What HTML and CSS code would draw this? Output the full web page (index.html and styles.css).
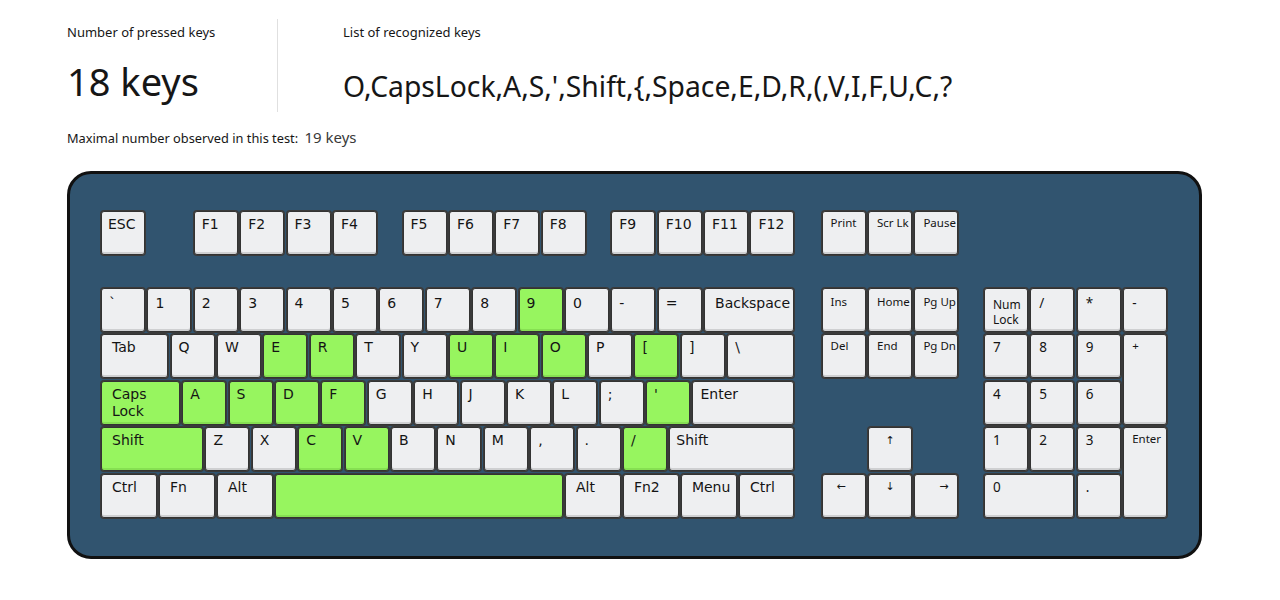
FILE: index.html
```html
<!DOCTYPE html>
<html lang="en">
<head>
<meta charset="utf-8">
<title>Keyboard rollover test</title>
<link rel="stylesheet" href="styles.css">
</head>
<body>
<div class="page">
  <div class="stats">
    <div class="stat first">
      <div class="label">Number of pressed keys</div>
      <div class="big">18 keys</div>
    </div>
    <div class="stat second">
      <div class="label">List of recognized keys</div>
      <div class="list">O,CapsLock,A,S,&#39;,Shift,{,Space,E,D,R,(,V,I,F,U,C,?</div>
    </div>
  </div>
  <div class="maxrow">Maximal number observed in this test: <span class="maxval">19 keys</span></div>

  <div class="keyboard">
    <div class="frow">
      <div class="fmain">
        <div class="key s">ESC</div><div class="sp1"></div>
        <div class="key">F1</div><div class="key">F2</div><div class="key">F3</div><div class="key">F4</div><div class="sp05"></div>
        <div class="key">F5</div><div class="key">F6</div><div class="key">F7</div><div class="key">F8</div><div class="sp05"></div>
        <div class="key">F9</div><div class="key">F10</div><div class="key">F11</div><div class="key">F12</div>
      </div>
      <div class="navtop">
        <div class="key small">Print</div><div class="key small">Scr Lk</div><div class="key small">Pause</div>
      </div>
    </div>

    <div class="lower">
      <div class="main">
        <div class="row numrow">
          <div class="key">`</div><div class="key">1</div><div class="key">2</div><div class="key">3</div><div class="key">4</div><div class="key">5</div><div class="key">6</div><div class="key">7</div><div class="key">8</div><div class="key on">9</div><div class="key">0</div><div class="key">-</div><div class="key">=</div><div class="key w2 m">Backspace</div>
        </div>
        <div class="row">
          <div class="key w15 m">Tab</div><div class="key">Q</div><div class="key">W</div><div class="key on">E</div><div class="key on">R</div><div class="key">T</div><div class="key">Y</div><div class="key on">U</div><div class="key on">I</div><div class="key on">O</div><div class="key">P</div><div class="key on">[</div><div class="key">]</div><div class="key w15">\</div>
        </div>
        <div class="row">
          <div class="key w175 m on">Caps<br>Lock</div><div class="key on">A</div><div class="key on">S</div><div class="key on">D</div><div class="key on">F</div><div class="key">G</div><div class="key">H</div><div class="key">J</div><div class="key">K</div><div class="key">L</div><div class="key">;</div><div class="key on">'</div><div class="key w225">Enter</div>
        </div>
        <div class="row">
          <div class="key w225 m on">Shift</div><div class="key">Z</div><div class="key">X</div><div class="key on">C</div><div class="key on">V</div><div class="key">B</div><div class="key">N</div><div class="key">M</div><div class="key">,</div><div class="key">.</div><div class="key on">/</div><div class="key w275 s">Shift</div>
        </div>
        <div class="row">
          <div class="key w125 m">Ctrl</div><div class="key w125 m">Fn</div><div class="key w125 m">Alt</div><div class="key w625 on"></div><div class="key w125 m">Alt</div><div class="key w125 m">Fn2</div><div class="key w125 m">Menu</div><div class="key w125 m">Ctrl</div>
        </div>
      </div>

      <div class="nav">
        <div class="key small low">Ins</div><div class="key small low">Home</div><div class="key small low">Pg Up</div>
        <div class="key small">Del</div><div class="key small">End</div><div class="key small">Pg Dn</div>
        <div class="key arrow up">&#8593;</div>
        <div class="key arrow left">&#8592;</div>
        <div class="key arrow down">&#8595;</div>
        <div class="key arrow right">&#8594;</div>
      </div>

      <div class="numpad">
        <div class="key np numlock">Num<br>Lock</div><div class="key np low">/</div><div class="key np low">*</div><div class="key np low">-</div>
        <div class="key np">7</div><div class="key np">8</div><div class="key np">9</div><div class="key small tall">+</div>
        <div class="key np">4</div><div class="key np">5</div><div class="key np">6</div>
        <div class="key np">1</div><div class="key np">2</div><div class="key np">3</div><div class="key small tall">Enter</div>
        <div class="key np wide">0</div><div class="key np">.</div>
      </div>
    </div>
  </div>
</div>
</body>
</html>
```

FILE: styles.css
```css
:root {
  --u: 46.4px;
  --g: 2.4px;
}

html, body {
  margin: 0;
  padding: 0;
  background: #ffffff;
}

body {
  font-family: "Noto Sans", "Open Sans", sans-serif;
  color: #161616;
}

.page {
  padding-left: 67px;
}

/* ---------- header stats ---------- */
.stats {
  display: flex;
  margin-top: 19px;
  height: 93px;
}

.stat.first {
  width: 210px;
  border-right: 1px solid #e0e0e0;
}

.stat.second {
  padding-left: 65px;
}

.label {
  font-size: 13px;
  line-height: 18px;
  padding-top: 4px;
  color: #161616;
}

.big {
  font-size: 38px;
  line-height: 46px;
  margin-top: 17px;
  color: #161616;
}

.list {
  font-size: 28.3px;
  line-height: 34px;
  margin-top: 28px;
  color: #161616;
  white-space: nowrap;
}

.maxrow {
  margin-top: 15px;
  height: 20px;
  font-size: 12.8px;
  line-height: 20px;
  color: #161616;
}

.maxval {
  font-size: 15px;
  margin-left: 3px;
  color: #393939;
}

/* ---------- keyboard ---------- */
.keyboard {
  box-sizing: border-box;
  width: 1135px;
  height: 388px;
  margin-top: 24px;
  padding: 37px 31px 0 31px;
  background: #31546f;
  border: 3px solid #111111;
  border-radius: 24px;
}

.frow {
  display: flex;
}

.fmain {
  display: flex;
  gap: var(--g);
  width: 693.6px;
}

.sp1 {
  width: calc(var(--u) - var(--g));
  flex: none;
}

.sp05 {
  width: calc(var(--u) * 0.5 - var(--g));
  flex: none;
}

.navtop {
  display: flex;
  gap: var(--g);
  margin-left: 27px;
}

.lower {
  display: flex;
  margin-top: 33px;
}

.main {
  display: flex;
  flex-direction: column;
  gap: var(--g);
  width: 693.6px;
}

.row {
  display: flex;
  gap: var(--g);
}

.nav {
  display: grid;
  grid-template-columns: repeat(3, 44px);
  grid-template-rows: repeat(5, 44px);
  gap: var(--g);
  margin-left: 27px;
}

.numpad {
  display: grid;
  grid-template-columns: repeat(4, 44px);
  grid-template-rows: repeat(5, 44px);
  gap: var(--g);
  margin-left: 25.6px;
}

/* ---------- keys ---------- */
.key {
  box-sizing: border-box;
  flex: none;
  width: 44px;
  height: 44px;
  padding: 4px 0 0 7px;
  background: #eeeff1;
  border: 1px solid #333333;
  border-radius: 3px;
  box-shadow: inset 0 -2px 0 #cfd0d2, 0 0 0 1px #3a3a3a;
  font-family: "DejaVu Sans", Verdana, sans-serif;
  font-size: 14px;
  line-height: 17px;
  color: #141414;
  white-space: nowrap;
}

.numrow .key { padding-top: 6px; }

.key.on {
  background: #97f55f;
  box-shadow: inset 0 -2px 0 #86e052, 0 0 0 1px #3a3a3a;
}

.key.m { padding-left: 10px; }
.key.s { padding-left: 6px; }

.w125 { width: calc(var(--u) * 1.25 - var(--g)); }
.w15  { width: calc(var(--u) * 1.5 - var(--g)); }
.w175 { width: calc(var(--u) * 1.75 - var(--g)); }
.w2   { width: calc(var(--u) * 2 - var(--g)); }
.w225 { width: calc(var(--u) * 2.25 - var(--g)); }
.w275 { width: calc(var(--u) * 2.75 - var(--g)); }
.w625 { width: calc(var(--u) * 6.25 - var(--g)); }

.key.small {
  font-family: "Noto Sans", sans-serif;
  font-size: 11.5px;
  line-height: 14px;
  padding: 4px 0 0 8px;
}

.key.np {
  font-family: "Noto Sans", sans-serif;
  font-size: 13.5px;
  line-height: 17px;
  padding: 4px 0 0 8px;
}

.key.small.low,
.key.np.low { padding-top: 6px; }

.key.numlock {
  font-size: 12px;
  line-height: 15px;
  padding-top: 8px;
}

.key.tall {
  grid-row: span 2;
  height: auto;
}

.key.wide {
  grid-column: span 2;
  width: auto;
}

.key.arrow {
  font-family: "Noto Sans", "DejaVu Sans", sans-serif;
  font-size: 11px;
  line-height: 14px;
  padding: 5px 0 0 0;
  text-align: center;
}

.key.up    { grid-column: 2; grid-row: 4; }
.key.left  { grid-column: 1; grid-row: 5; text-align: left; padding-left: 14px; padding-top: 4px; }
.key.down  { grid-column: 2; grid-row: 5; padding-top: 4px; }
.key.right { grid-column: 3; grid-row: 5; text-align: right; padding-right: 9px; padding-top: 4px; }
```
